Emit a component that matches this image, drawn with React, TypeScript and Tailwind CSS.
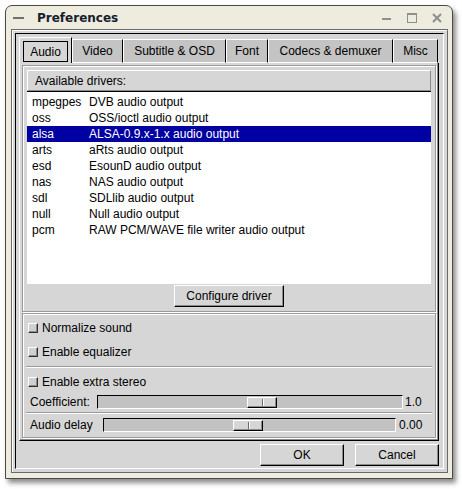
import React from "react";

const drivers = [
  ["mpegpes", "DVB audio output"],
  ["oss", "OSS/ioctl audio output"],
  ["alsa", "ALSA-0.9.x-1.x audio output"],
  ["arts", "aRts audio output"],
  ["esd", "EsounD audio output"],
  ["nas", "NAS audio output"],
  ["sdl", "SDLlib audio output"],
  ["null", "Null audio output"],
  ["pcm", "RAW PCM/WAVE file writer audio output"],
];

const tabs = [
  { label: "Audio", w: "w-[53px]" },
  { label: "Video", w: "w-[51px]" },
  { label: "Subtitle & OSD", w: "w-[103px]" },
  { label: "Font", w: "w-[42px]" },
  { label: "Codecs & demuxer", w: "w-[125px]" },
  { label: "Misc", w: "w-[45px]" },
];

function Check({ label }: { label: string }) {
  return (
    <div className="flex items-center h-[16px] pl-[4px]">
      <span className="w-[10px] h-[10px] bg-[#d0d0d0] border border-t-white border-l-white border-r-[#303030] border-b-[#303030] shadow-[inset_-1px_-1px_0_#8a8a8a]" />
      <span className="ml-[4px] leading-none">{label}</span>
    </div>
  );
}

function Slider({ width, pos }: { width: string; pos: string }) {
  return (
    <div className={`${width} h-[14px] bg-[#c2c2c2] border border-t-black border-l-black border-r-white border-b-white flex items-center`}>
      <div className={`${pos} w-[30px] h-[11px] bg-[#d6d6d6] border border-t-white border-l-white border-r-black border-b-black shadow-[inset_-1px_-1px_0_#8a8a8a] flex justify-center items-center`}>
        <span className="w-[1px] h-[7px] bg-[#6a6a6a] shadow-[1px_0_0_white]" />
      </div>
    </div>
  );
}

function Btn({ label, w }: { label: string; w: string }) {
  return (
    <div className={`${w} h-[22px] bg-[#d6d6d6] border border-t-white border-l-white border-r-black border-b-black shadow-[inset_-1px_-1px_0_#8a8a8a] flex items-center justify-center`}>
      {label}
    </div>
  );
}

export default function App() {
  return (
    <div className="w-[462px] h-[489px] bg-white pt-[5px] pl-[5px] font-['Liberation_Sans',Arial,sans-serif] text-[12px] text-black">
      <div className="w-[448px] h-[474px] bg-[#eeecdf] border border-[#4a4a42] rounded-t-[7px] shadow-[3px_4px_5px_rgba(0,0,0,0.45)] flex flex-col">
        {/* title bar */}
        <div className="h-[23px] flex items-center">
          <svg width="12" height="4" className="ml-[7px]">
            <rect x="0" y="1" width="11" height="2" fill="#707070" />
          </svg>
          <span className="ml-[12px] font-['DejaVu_Sans',sans-serif] font-bold text-[12px] text-[#16202c]">Preferences</span>
          <div className="ml-auto mr-[10px] flex items-center gap-[15px]">
            <svg width="10" height="10">
              <rect x="0" y="5" width="9" height="2" fill="#8e8e8e" />
            </svg>
            <svg width="10" height="10">
              <rect x="0.5" y="0.5" width="9" height="9" fill="none" stroke="#8e8e8e" />
              <rect x="0" y="0" width="10" height="2" fill="#8e8e8e" />
            </svg>
            <svg width="10" height="10">
              <path d="M1 1 L9 9 M9 1 L1 9" stroke="#8e8e8e" strokeWidth="2" />
            </svg>
          </div>
        </div>

        {/* content */}
        <div className="ml-[5px] w-[437px] h-[444px] bg-[#d6d6d6] border border-[#6a6a6a] shadow-[inset_1px_1px_0_white] p-[3px]">
          <div className="h-full border border-t-black border-l-black border-r-white border-b-white flex flex-col">
            {/* notebook */}
            <div className="ml-[3px] mt-[3px] w-[420px]">
              <div className="flex items-end h-[26px]">
                {tabs.map((t, i) =>
                  i === 0 ? (
                    <div key={t.label} className={`${t.w} h-[26px] bg-[#d6d6d6] border-t border-l border-r border-t-white border-l-white border-r-black px-[3px] pt-[3px]`}>
                      <div className="h-[21px] border border-black flex items-center justify-center">{t.label}</div>
                    </div>
                  ) : (
                    <div key={t.label} className={`${t.w} h-[24px] bg-[#c4c4c4] border-t border-l border-r border-t-white border-l-white border-r-black flex items-center justify-center border-b border-b-white`}>
                      {t.label}
                    </div>
                  )
                )}
              </div>
              <div className="h-[378px] bg-[#d6d6d6] border-l border-b border-r border-l-white border-r-black border-b-black shadow-[inset_-1px_-1px_0_#8a8a8a] p-[2px] flex flex-col">
                {/* drivers frame */}
                <div className="h-[247px] border border-[#9a9a9a] shadow-[inset_1px_1px_0_white,1px_1px_0_white] p-[3px] flex flex-col items-center">
                  <div className="w-[404px] h-[21px] bg-[#d6d6d6] border border-t-white border-l-white border-r-[#8a8a8a] border-b-[#8a8a8a] flex items-center pl-[7px] mt-[1px]">
                    Available drivers:
                  </div>
                  <div className="w-[404px] h-[193px] bg-white border-t border-black pt-[2px]">
                    {drivers.map(([n, d]) => (
                      <div key={n} className={`h-[16px] flex items-center ${n === "alsa" ? "bg-[#0000a2] text-white" : ""}`}>
                        <span className="w-[62px] pl-[5px]">{n}</span>
                        <span>{d}</span>
                      </div>
                    ))}
                  </div>
                  <div className="mt-[1px]">
                    <Btn label="Configure driver" w="w-[110px]" />
                  </div>
                </div>

                {/* sound frame */}
                <div className="mt-[1px] flex-1 border border-[#9a9a9a] shadow-[inset_1px_1px_0_white,1px_1px_0_white] pt-[6px] px-[1px] flex flex-col">
                  <Check label="Normalize sound" />
                  <div className="mt-[8px]">
                    <Check label="Enable equalizer" />
                  </div>
                  <div className="mt-[6px] mx-[2px] h-[2px] border-t border-[#9a9a9a] bg-white" />
                  <div className="mt-[6px]">
                    <Check label="Enable extra stereo" />
                  </div>
                  <div className="mt-[5px] flex items-center h-[14px] pl-[6px]">
                    <span className="w-[67px]">Coefficient:</span>
                    <Slider width="w-[306px]" pos="ml-[149px]" />
                    <span className="ml-[2px]">1.0</span>
                  </div>
                  <div className="mt-[3px] mx-[2px] h-[2px] border-t border-[#9a9a9a] bg-white" />
                  <div className="mt-[4px] flex items-center h-[14px] pl-[6px]">
                    <span className="w-[73px]">Audio delay</span>
                    <Slider width="w-[293px]" pos="ml-[129px]" />
                    <span className="ml-[3px]">0.00</span>
                  </div>
                </div>
              </div>
            </div>

            {/* buttons */}
            <div className="mt-[3px] mr-[4px] flex justify-end gap-[11px]">
              <Btn label="OK" w="w-[84px]" />
              <Btn label="Cancel" w="w-[84px]" />
            </div>
          </div>
        </div>
      </div>
    </div>
  );
}
